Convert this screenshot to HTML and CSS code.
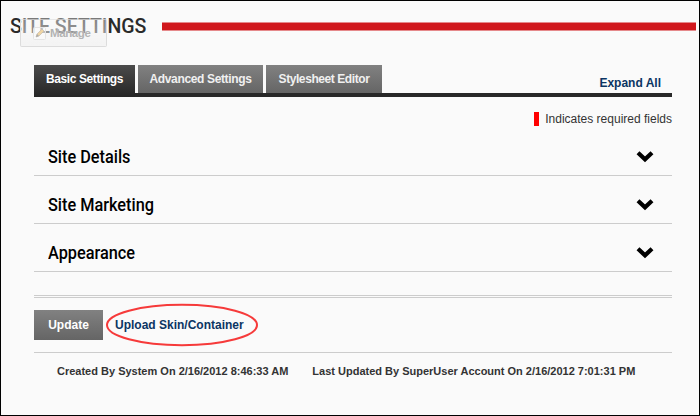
FILE: index.html
```
<!DOCTYPE html>
<html lang="en">
<head>
<meta charset="utf-8">
<title>Site Settings</title>
<link rel="stylesheet" href="styles.css">
</head>
<body>
<div class="page">
  <header class="head">
    <h1 class="title">S<span class="faded">ITE SETTI</span>NGS</h1>
    <div class="rule"></div>
    <div class="manage">
      <svg class="pencil" width="13" height="13" viewBox="0 0 13 13"><rect x=".5" y=".5" width="12" height="12" rx="1" fill="#fff" fill-opacity=".4" stroke="#e4e4e4"/><path d="M3 10l1-3 5-5 2 2-5 5z" fill="#efd5a4" stroke="#c4bcb0" stroke-width=".7"/><path d="M3 10l1-3 2 2z" fill="#aaa"/></svg>
      <span>Manage</span>
    </div>
  </header>
  <main class="main">
    <nav class="tabs">
      <a class="tab active">Basic Settings</a>
      <a class="tab advanced">Advanced Settings</a>
      <a class="tab editor">Stylesheet Editor</a>
      <a class="expand">Expand All</a>
    </nav>
    <p class="required"><i></i><span>Indicates required fields</span></p>
    <section class="row"><h2>Site Details</h2><svg class="chev" width="18" height="13" viewBox="0 0 18 13"><path d="M2 2.8L9 9.4l7-6.6"/></svg></section>
    <section class="row"><h2>Site Marketing</h2><svg class="chev" width="18" height="13" viewBox="0 0 18 13"><path d="M2 2.8L9 9.4l7-6.6"/></svg></section>
    <section class="row"><h2>Appearance</h2><svg class="chev" width="18" height="13" viewBox="0 0 18 13"><path d="M2 2.8L9 9.4l7-6.6"/></svg></section>
    <div class="double"></div>
    <div class="actions">
      <a class="update">Update</a>
      <a class="upload">Upload Skin/Container<svg class="ring" width="154" height="44" viewBox="0 0 154 44"><ellipse cx="77" cy="22" rx="75" ry="20.2"/></svg></a>
    </div>
    <footer class="audit"><span>Created By System On 2/16/2012 8:46:33 AM</span><span>Last Updated By SuperUser Account On 2/16/2012 7:01:31 PM</span></footer>
  </main>
</div>
</body>
</html>
```

FILE: styles.css
```
* { box-sizing: border-box; }
body { margin: 0; font: 12px/16px "Liberation Sans", Arial, sans-serif; color: #333; }
h1, h2, p { margin: 0; }
.page { width: 700px; height: 416px; border: 1px solid #000; background: #fafafa; overflow: hidden; }
.head { position: relative; display: flex; height: 64px; padding: 12px 3px 0 9px; }
.title { width: 152px; font: 500 21px/26px Roboto, sans-serif; white-space: nowrap; color: #2a2a2a; transform: scaleX(.93); transform-origin: 0 0; }
.faded { color: #7a7a7a; }
.rule { flex: 1; height: 9px; margin-top: 9px; background: #d0171c; border-top: 1px solid #e5898b; border-bottom: 1px solid #e5898b; }
.manage { position: absolute; left: 19px; top: 18px; width: 87px; height: 28px; display: flex; align-items: center; gap: 4px; padding: 0 0 0 12px; border: 1px solid #dcdcdc; border-top-color: rgba(220,220,220,.5); border-radius: 2px; background: linear-gradient(rgba(250,250,250,.1), rgba(232,232,232,.35)); font-weight: bold; font-size: 11.5px; letter-spacing: -.4px; color: #b3b3b3; }
.main { width: 638px; margin-left: 33px; }
.tabs { display: flex; gap: 3px; height: 32px; border-bottom: 4px solid #282828; }
.tab { height: 28px; display: flex; align-items: center; justify-content: center; color: #f0f0f0; font-weight: bold; letter-spacing: -.35px; background: linear-gradient(#818181, #656565); white-space: nowrap; }
.active { width: 101px; height: 32px; padding-bottom: 4px; letter-spacing: -.4px; color: #fff; background: linear-gradient(#4b4b4b, #252525); }
.advanced { width: 125px; }
.editor { width: 116px; letter-spacing: -.42px; }
.expand { margin: 10px 11px 0 auto; font-weight: bold; color: #0b3563; }
.required { display: flex; justify-content: flex-end; align-items: center; height: 14px; margin-top: 15px; gap: 6px; }
.required i { width: 5px; height: 14px; background: #f00; }
.row { display: flex; justify-content: space-between; align-items: center; height: 48px; padding: 10px 18px 0 14px; border-bottom: 1px solid #ccc; }
.required + .row { margin-top: 2px; }
.row h2 { font: 500 18px/24px Roboto, sans-serif; color: #000; white-space: nowrap; transform: scaleX(.905); transform-origin: 0 0; }
.chev { fill: none; stroke: #000; stroke-width: 4.2; }
.double { height: 3px; margin-top: 23px; border-top: 1px solid #ccc; border-bottom: 1px solid #ccc; }
.actions { display: flex; align-items: center; height: 55px; padding-bottom: 1px; border-bottom: 1px solid #ccc; }
.update { width: 69px; height: 30px; line-height: 30px; text-align: center; font-weight: bold; color: #fff; background: linear-gradient(#818181, #656565); }
.upload { position: relative; margin-left: 12px; font-weight: bold; color: #0b3563; white-space: nowrap; }
.ring { position: absolute; left: -10px; top: -14px; fill: none; stroke: #f63a3a; stroke-width: 2; }
.audit { display: flex; gap: 24px; padding: 10px 0 0 23px; font-size: 11px; font-weight: bold; white-space: nowrap; }
```
